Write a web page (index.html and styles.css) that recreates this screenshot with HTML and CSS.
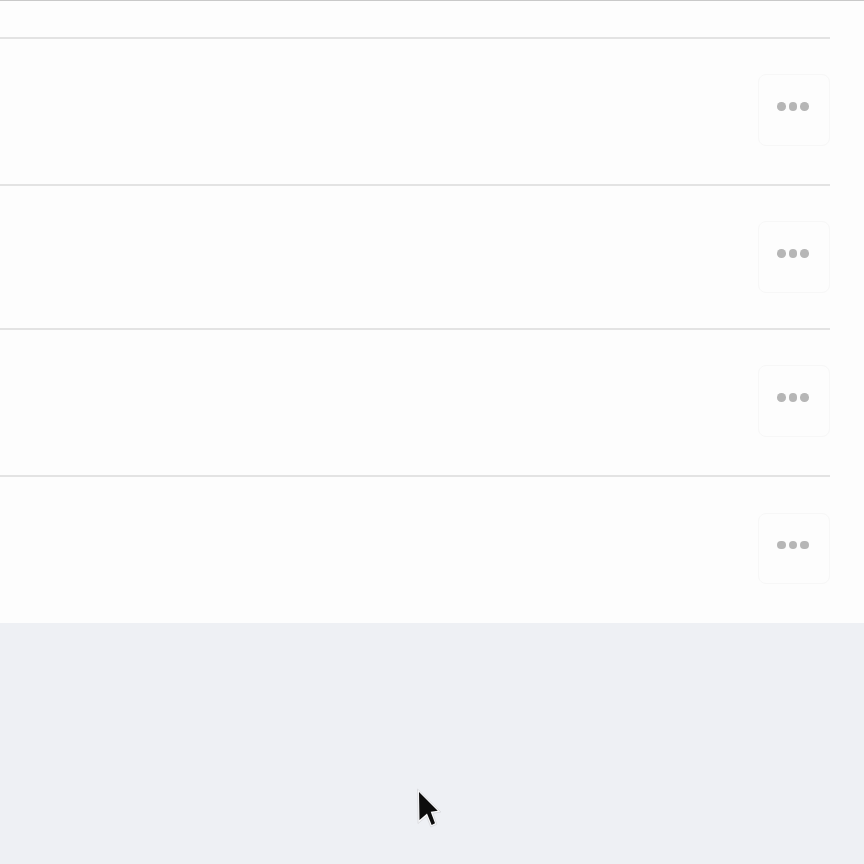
FILE: index.html
```html
<!DOCTYPE html>
<html lang="en">
<head>
<meta charset="utf-8">
<title>List</title>
<link rel="stylesheet" href="styles.css">
</head>
<body>
<main class="panel">
  <div class="lead"></div>
  <ul class="list">
    <li class="row row-a"><button class="more" aria-label="More"><span class="dot"></span><span class="dot"></span><span class="dot"></span></button></li>
    <li class="row row-b"><button class="more" aria-label="More"><span class="dot"></span><span class="dot"></span><span class="dot"></span></button></li>
    <li class="row row-a"><button class="more" aria-label="More"><span class="dot"></span><span class="dot"></span><span class="dot"></span></button></li>
    <li class="row row-c"><button class="more more-low" aria-label="More"><span class="dot"></span><span class="dot"></span><span class="dot"></span></button></li>
  </ul>
</main>
<svg class="cursor" width="30" height="42" viewBox="0 0 30 42" aria-hidden="true">
  <path class="cursor-halo" d="M3.500 1 L4 35.500 L12.500 28.500 L16.800 39 L22.800 36.300 L19 25.300 L27 24 Z"/>
  <path class="cursor-arrow" d="M5 4 L5.500 32 L13 25.500 L17.700 37 L21 35.300 L16.700 23.700 L23.700 22.700 Z"/>
</svg>
</body>
</html>
```
FILE: styles.css
```css
html, body {
  margin: 0;
  padding: 0;
  height: 864px;
  overflow: hidden;
  background: #eef0f4;
  font-family: "Liberation Sans", sans-serif;
}
body {
  position: relative;
}
.panel {
  height: 623px;
  box-sizing: border-box;
  background: #fdfdfd;
  border-top: 1px solid #c9c9c9;
  padding-right: 34px;
}
.lead {
  height: 36px;
}
.list {
  list-style: none;
  margin: 0;
  padding: 0;
}
.row {
  box-sizing: border-box;
  border-top: 2px solid #e3e3e3;
  padding-top: 35px;
  display: flex;
  justify-content: flex-end;
}
.row-a {
  height: 147px;
}
.row-b {
  height: 144px;
}
.row-c {
  height: 148px;
}
.more {
  width: 72px;
  height: 72px;
  padding: 0 2px 7px 0;
  box-sizing: border-box;
  background: #fdfdfd;
  border: 1px solid #f7f7f7;
  border-radius: 8px;
  display: flex;
  align-items: center;
  justify-content: center;
  gap: 3px;
}
.more-low {
  margin-top: 1px;
  height: 71px;
}
.dot {
  width: 8.500px;
  height: 8.500px;
  border-radius: 50%;
  background: #b6b6b6;
}
.cursor {
  position: absolute;
  left: 414px;
  top: 788px;
  filter: blur(0.4px);
}
.cursor-halo {
  fill: #f8f8f9;
  stroke: #dcdde1;
  stroke-width: 1;
}
.cursor-arrow {
  fill: #0c0c0c;
}
```
